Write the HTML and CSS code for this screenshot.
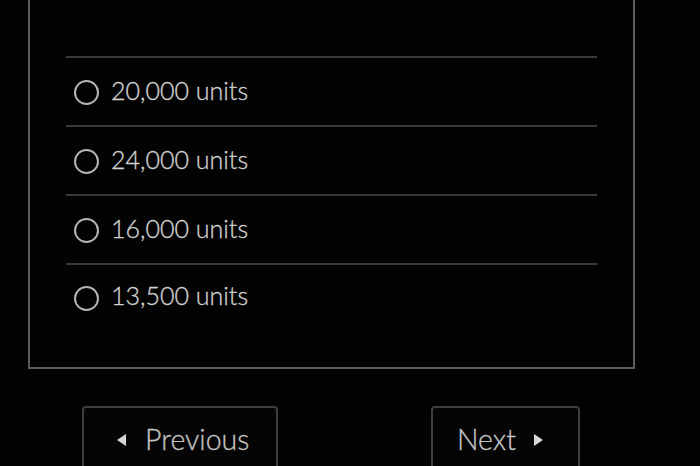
FILE: index.html
```html
<!DOCTYPE html>
<html>
<head>
<meta charset="utf-8">
<link rel="stylesheet" href="styles.css">
</head>
<body>
<div class="page">
  <div class="card">
    <ul class="options">
      <li class="option"><span class="radio"></span><span class="label">20,000 units</span></li>
      <li class="option"><span class="radio"></span><span class="label">24,000 units</span></li>
      <li class="option"><span class="radio"></span><span class="label">16,000 units</span></li>
      <li class="option last"><span class="radio"></span><span class="label">13,500 units</span></li>
    </ul>
  </div>
  <div class="nav">
    <button class="btn prev"><span class="tri tri-left"></span><span>Previous</span></button>
    <button class="btn next"><span>Next</span><span class="tri tri-right"></span></button>
  </div>
</div>
</body>
</html>
```

FILE: styles.css
```css
html, body {
  margin: 0;
  padding: 0;
  background: #030303;
  height: 100%;
  overflow: hidden;
}
.page {
  font-family: Lato, "Open Sans", sans-serif;
  color: #d2d2d2;
  padding-left: 28px;
}
.card {
  border: 2px solid #5c5c5c;
  border-top: none;
  padding: 56px 36px 0 36px;
  box-sizing: content-box;
  width: 531px;
}
.options {
  list-style: none;
  margin: 0;
  padding: 0;
}
.option {
  display: flex;
  align-items: center;
  height: 67px;
  border-top: 2px solid #3a3a3a;
  padding-left: 8px;
}
.option.last {
  align-items: flex-start;
  padding-top: 16px;
  box-sizing: border-box;
  height: 104px;
}
.option.last .radio { margin-top: 5px; }
.radio {
  width: 21px;
  height: 21px;
  border: 2px solid #b5b5b5;
  border-radius: 50%;
  flex: none;
  margin-top: 2px;
}
.label {
  margin-left: 12px;
  font-size: 25px;
  font-weight: 300;
  line-height: 28px;
  padding-bottom: 3px;
  -webkit-text-stroke: 0.3px #d2d2d2;
}
.option.last .label { padding-bottom: 0; }
.nav {
  display: flex;
  margin-top: 37px;
  padding-left: 54px;
}
.btn {
  display: flex;
  align-items: flex-start;
  height: 70px;
  padding: 15px 0 0 0;
  box-sizing: border-box;
  background: #050505;
  border: 2px solid #3e3e3e;
  border-radius: 4px;
  color: #c4c4c4;
  font-family: Lato, "Open Sans", sans-serif;
  font-size: 28.5px;
  font-weight: 300;
  line-height: 32px;
  -webkit-text-stroke: 0.3px #c4c4c4;
}
.prev {
  width: 196px;
  padding-left: 33px;
  gap: 19px;
}
.next {
  width: 149px;
  margin-left: 153px;
  padding-left: 24px;
  gap: 18px;
}
.tri {
  width: 0;
  height: 0;
  border-top: 6px solid transparent;
  border-bottom: 6px solid transparent;
  margin-top: 11px;
}
.tri-left { border-right: 9px solid #d8d8d8; }
.tri-right { border-left: 9px solid #d8d8d8; }
```
